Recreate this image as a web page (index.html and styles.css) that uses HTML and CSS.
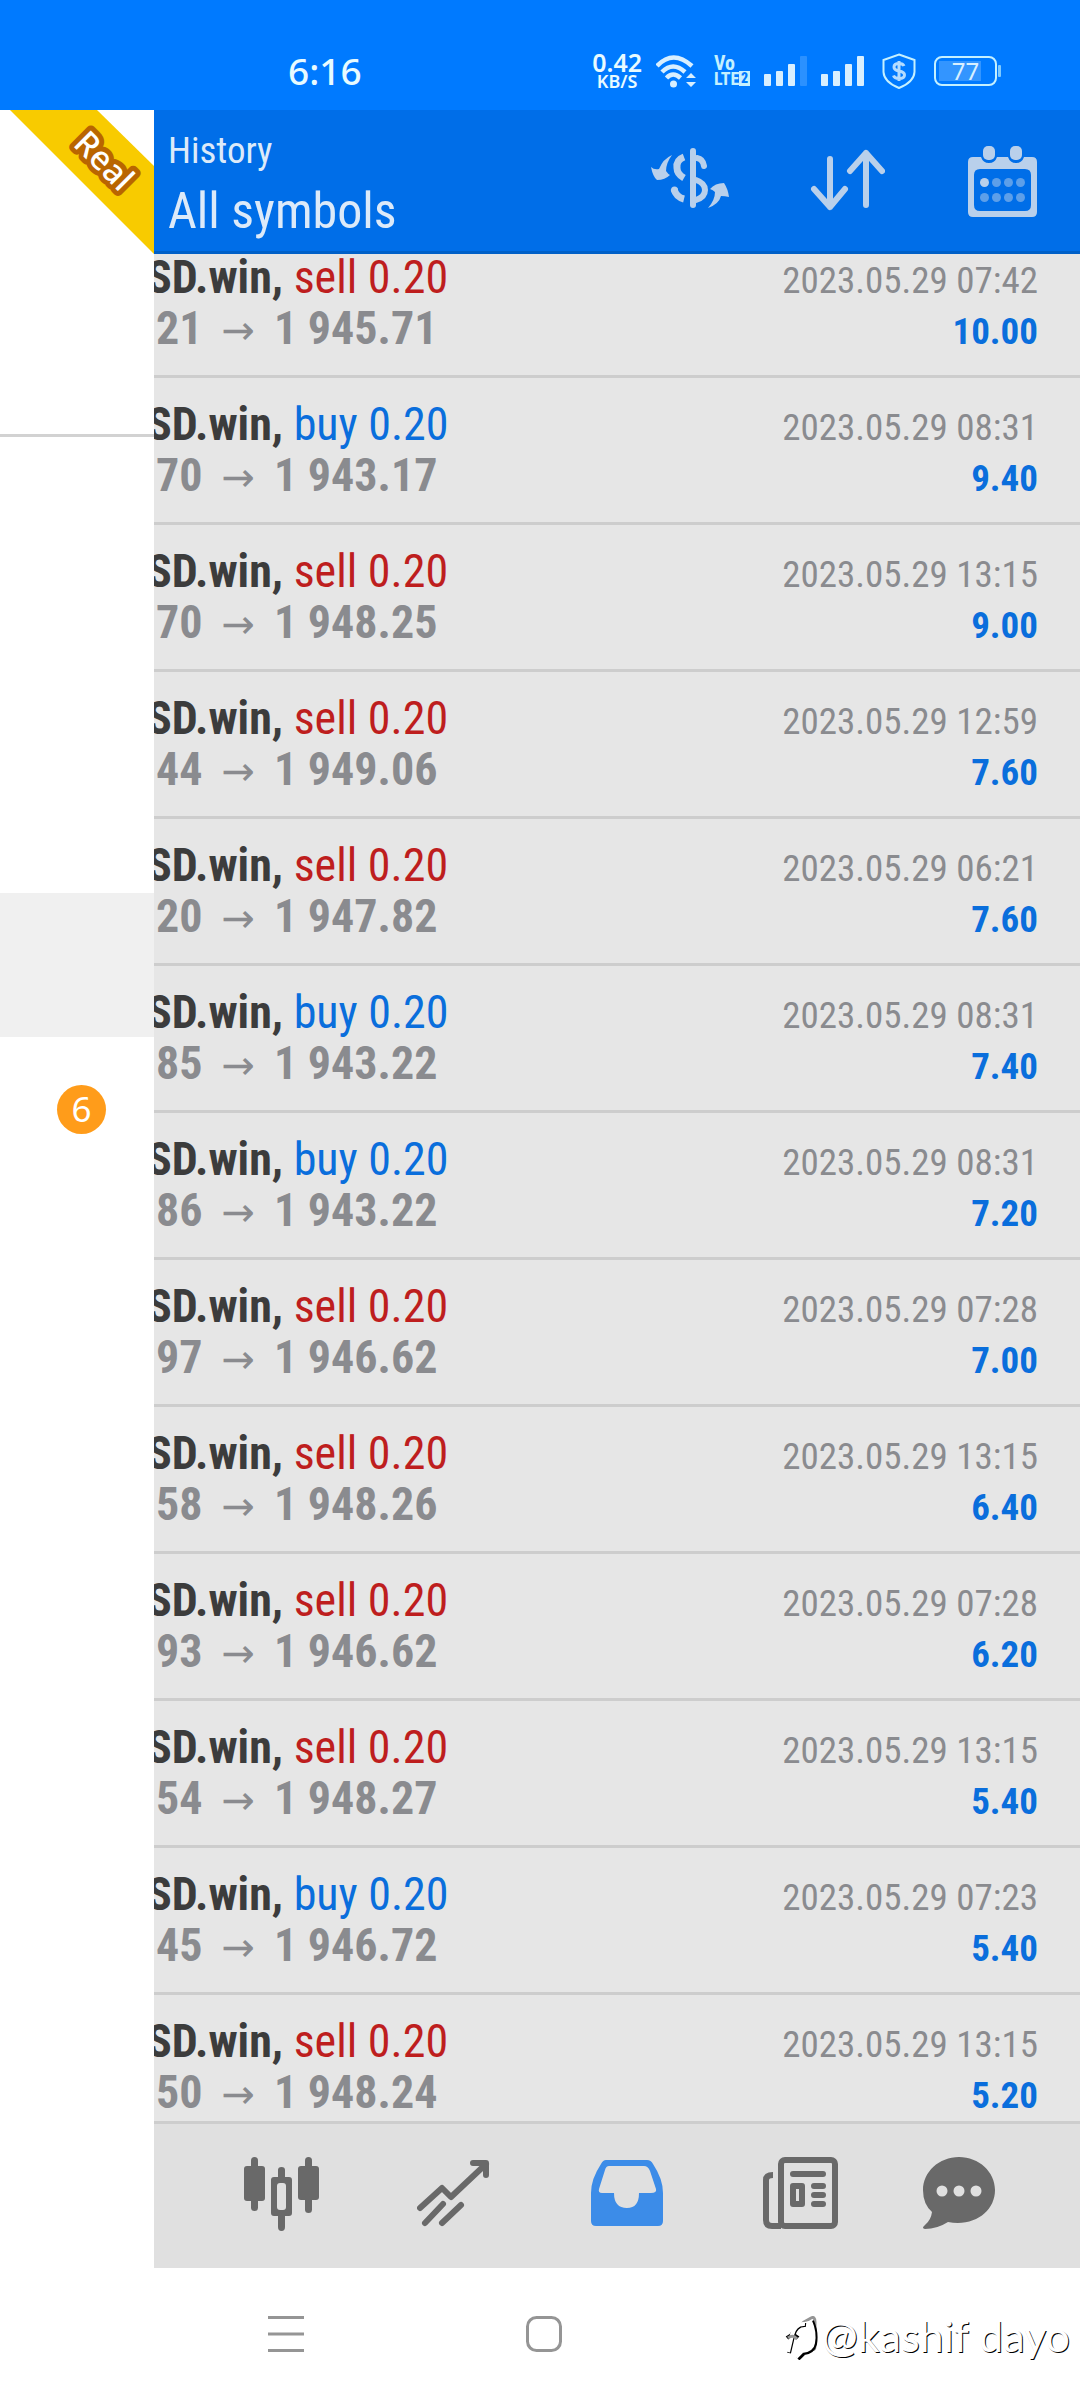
FILE: index.html
```html
<!DOCTYPE html>
<html lang="en">
<head>
<meta charset="utf-8">
<meta name="viewport" content="width=device-width">
<title>History</title>
<link rel="stylesheet" href="styles.css">
</head>
<body>
<div class="status">
  <time class="clock">6:16</time>
  <div class="indicators">
    <div class="speed"><span class="rate">0.42</span><span class="unit">KB/S</span></div>
    <svg width="44" height="36" viewBox="0 0 44 36">
      <g fill="none" stroke="#d8efff" stroke-width="4.5"><path d="M1 13Q17 -4 36 13"/><path d="M6 19Q17 8 29 19"/><path d="M10.500 25Q17 18 24.500 25"/></g>
      <circle cx="17.500" cy="31" r="3.500" fill="#d8efff"/>
      <path d="M30 25l5-5 5 5zM30 29l5 5 5-5z" fill="#d8efff"/>
    </svg>
    <div class="volte"><span>Vo</span><span class="lte">LTE<b class="sim">2</b></span></div>
    <svg width="43" height="30" viewBox="0 0 43 30" fill="#d8efff"><rect y="18" width="7" height="12" rx="1"/><rect x="12" y="15" width="7" height="15" rx="1"/><rect x="24" y="8" width="7" height="22" rx="1"/><rect x="36" width="7" height="30" rx="1" opacity=".2"/></svg>
    <svg width="43" height="30" viewBox="0 0 43 30" fill="#d8efff"><rect y="18" width="7" height="12" rx="1"/><rect x="12" y="15" width="7" height="15" rx="1"/><rect x="24" y="8" width="7" height="22" rx="1"/><rect x="36" width="7" height="30" rx="1"/></svg>
    <svg width="42" height="36" viewBox="0 0 42 36"><path d="M21 1.500L36.500 7V19Q36 29 21 35Q6 29 5.500 19V7Z" fill="none" stroke="#c4f0ff" stroke-width="2"/><path d="M26 13Q25 10.500 21 10.500Q16 10.500 16 14Q16 17 21 18Q26.500 19 26.500 22Q26.500 25.500 21 25.500Q16.500 25.500 15.500 22.500M21 8V28" fill="none" stroke="#b4dcff" stroke-width="3"/></svg>
    <div class="battery"><span class="cell">77</span><i class="tip"></i></div>
  </div>
</div>

<div class="stage">
  <aside class="drawer">
    <svg class="ribbon" width="154" height="144" viewBox="0 0 154 144">
      <path d="M10 0H97L154 56V144Z" fill="#f8cb00"/>
      <text class="ribbon-text" transform="translate(72 35) rotate(45)">Real</text>
    </svg>
    <div class="account"></div>
    <ul class="menu">
      <li></li><li></li><li></li><li class="selected"></li>
      <li><span class="badge">6</span></li>
    </ul>
  </aside>

  <main class="app">
    <header class="bar">
      <div class="titles"><span class="title">History</span><h1 class="subtitle">All symbols</h1></div>
      <div class="actions">
        <button aria-label="Currency"><svg width="78" height="78" viewBox="0 0 78 78">
          <path d="M0 28Q3 31 8 30Q12 20 21 16Q15 24 15 32Q17 35 19 36Q14 41 6 41Q2 38 0 28Z"/>
          <path d="M78 58Q74 57 70 57Q68 65 57 69Q64 61 64 53Q62 51 59 50Q64 44 73 44Q77 50 78 58Z"/>
          <g class="line"><path d="M42 12V66" stroke-width="6"/><path d="M33 18Q25 21 26 29Q26 35 33 39M33 60Q25 58 23 50" stroke-width="7" stroke-linecap="butt"/><path d="M46 19Q52 20 53 27M45 41Q54 44 54 51Q54 58 45 61" stroke-width="6"/></g>
          <circle cx="23.500" cy="51" r="3.500"/>
        </svg></button>
        <button aria-label="Sort"><svg width="78" height="78" viewBox="0 0 78 78"><g class="line" stroke-width="6"><path d="M23 20V68M7 50L23 68L38 50M59 66V14M43 32L59 14L75 32"/></g></svg></button>
        <button aria-label="Period"><svg width="78" height="78" viewBox="0 0 78 78">
          <path fill-rule="evenodd" d="M10 18H18Q20 24 26 24Q32 24 34 18H45Q47 24 53 24Q59 24 61 18H69Q74 18 74 23V73Q74 78 69 78H10Q5 78 5 73V23Q5 18 10 18ZM17 30Q11 30 11 36V66Q11 72 17 72H62Q68 72 68 66V36Q68 30 62 30Z"/>
          <rect x="20" y="7" width="12" height="14" rx="5"/><rect x="47" y="7" width="12" height="14" rx="5"/>
          <circle cx="21.500" cy="43.500" r="4.500"/>
          <g opacity=".5"><circle cx="33.500" cy="43.500" r="4.500"/><circle cx="45.500" cy="43.500" r="4.500"/><circle cx="57.500" cy="43.500" r="4.500"/><circle cx="21.500" cy="58.500" r="4.500"/><circle cx="33.500" cy="58.500" r="4.500"/><circle cx="45.500" cy="58.500" r="4.500"/><circle cx="57.500" cy="58.500" r="4.500"/></g>
        </svg></button>
      </div>
    </header>

    <section class="viewport">
      <ul class="deals">
        <li><p class="deal"><b>SD.win,</b> <span class="sell">sell 0.20</span></p><time>2023.05.29 07:42</time><p class="price">21<span class="arrow">→</span>1 945.71</p><b class="profit">10.00</b></li>
        <li><p class="deal"><b>SD.win,</b> <span class="buy">buy 0.20</span></p><time>2023.05.29 08:31</time><p class="price">70<span class="arrow">→</span>1 943.17</p><b class="profit">9.40</b></li>
        <li><p class="deal"><b>SD.win,</b> <span class="sell">sell 0.20</span></p><time>2023.05.29 13:15</time><p class="price">70<span class="arrow">→</span>1 948.25</p><b class="profit">9.00</b></li>
        <li><p class="deal"><b>SD.win,</b> <span class="sell">sell 0.20</span></p><time>2023.05.29 12:59</time><p class="price">44<span class="arrow">→</span>1 949.06</p><b class="profit">7.60</b></li>
        <li><p class="deal"><b>SD.win,</b> <span class="sell">sell 0.20</span></p><time>2023.05.29 06:21</time><p class="price">20<span class="arrow">→</span>1 947.82</p><b class="profit">7.60</b></li>
        <li><p class="deal"><b>SD.win,</b> <span class="buy">buy 0.20</span></p><time>2023.05.29 08:31</time><p class="price">85<span class="arrow">→</span>1 943.22</p><b class="profit">7.40</b></li>
        <li><p class="deal"><b>SD.win,</b> <span class="buy">buy 0.20</span></p><time>2023.05.29 08:31</time><p class="price">86<span class="arrow">→</span>1 943.22</p><b class="profit">7.20</b></li>
        <li><p class="deal"><b>SD.win,</b> <span class="sell">sell 0.20</span></p><time>2023.05.29 07:28</time><p class="price">97<span class="arrow">→</span>1 946.62</p><b class="profit">7.00</b></li>
        <li><p class="deal"><b>SD.win,</b> <span class="sell">sell 0.20</span></p><time>2023.05.29 13:15</time><p class="price">58<span class="arrow">→</span>1 948.26</p><b class="profit">6.40</b></li>
        <li><p class="deal"><b>SD.win,</b> <span class="sell">sell 0.20</span></p><time>2023.05.29 07:28</time><p class="price">93<span class="arrow">→</span>1 946.62</p><b class="profit">6.20</b></li>
        <li><p class="deal"><b>SD.win,</b> <span class="sell">sell 0.20</span></p><time>2023.05.29 13:15</time><p class="price">54<span class="arrow">→</span>1 948.27</p><b class="profit">5.40</b></li>
        <li><p class="deal"><b>SD.win,</b> <span class="buy">buy 0.20</span></p><time>2023.05.29 07:23</time><p class="price">45<span class="arrow">→</span>1 946.72</p><b class="profit">5.40</b></li>
        <li><p class="deal"><b>SD.win,</b> <span class="sell">sell 0.20</span></p><time>2023.05.29 13:15</time><p class="price">50<span class="arrow">→</span>1 948.24</p><b class="profit">5.20</b></li>
      </ul>
    </section>

    <nav class="tabs">
      <button aria-label="Quotes"><svg width="75" height="76" viewBox="0 0 75 76">
        <rect y="10" width="21" height="35" rx="3"/><rect x="7" y="1" width="7" height="54" rx="3.500"/><rect x="54" y="10" width="21" height="34" rx="3"/><rect x="61" y="1" width="7" height="56" rx="3.500"/>
        <path d="M34 21V14Q34 11 37.500 11Q41 11 41 14V21H45Q48 21 48 24V57Q48 60 45 60H41V71Q41 75 37.500 75Q34 75 34 71V60H30Q27 60 27 57V24Q27 21 30 21Z"/><rect x="33" y="27" width="9" height="27" rx="3" fill="#e0e0e0"/>
      </svg></button>
      <button aria-label="Charts"><svg width="75" height="76" viewBox="0 0 75 76">
        <g class="line" stroke-width="6"><path d="M3 52L25 32L34 41L69 8M56 7H69V19"/><path d="M8 67L26 48M25 67L44 49"/></g>
      </svg></button>
      <button class="active" aria-label="Trade"><svg width="75" height="76" viewBox="0 0 75 76">
        <path fill-rule="evenodd" d="M16 4H57Q61 4 63 8Q73 23 73 37V65Q73 70 68 70H6Q1 70 1 65V37Q1 23 11 8Q13 4 16 4ZM19 10Q16 10 15 14L9 33Q8 37 12 37H24Q24 52 37 52Q49 52 49 37H61Q67 37 66 33L60 15Q58 10 54 10Z"/>
      </svg></button>
      <button aria-label="News"><svg width="75" height="76" viewBox="0 0 75 76">
        <g class="line" stroke-width="6"><rect x="18" y="4" width="54" height="66" rx="4"/><path d="M10 19Q3 19 3 24V64Q3 70 9 70H18" stroke-linecap="butt"/><path d="M30 18H60M51 30H60M51 39H60M51 48H60"/><rect x="30" y="30" width="9" height="18"/></g>
      </svg></button>
      <button aria-label="Chat"><svg width="75" height="76" viewBox="0 0 75 76">
        <path d="M38 1C58 1 74 16 74 34C74 55 54 71 27 66Q16 73 4 73Q0 72 4 69Q10 64 11 56Q2 48 2 34C2 16 18 1 38 1Z"/>
        <g fill="#e0e0e0"><circle cx="21" cy="35" r="5.500"/><circle cx="38" cy="35" r="5.500"/><circle cx="55" cy="35" r="5.500"/></g>
      </svg></button>
    </nav>
  </main>
</div>

<nav class="system">
  <button aria-label="Recent"><svg width="36" height="36" viewBox="0 0 36 36"><path d="M0 1.500H36M0 18H36M0 34.500H36"/></svg></button>
  <button aria-label="Home"><svg width="36" height="36" viewBox="0 0 36 36"><rect x="1.500" y="1.500" width="33" height="33" rx="9"/></svg></button>
  <button aria-label="Back"><svg width="36" height="36" viewBox="0 0 36 36"><path d="M20 6L27 2Q31 0 31 6V30Q31 35 27 33L9 22Q5 19 9 16Z"/></svg></button>
  <div class="watermark">
    <svg width="38" height="48" viewBox="0 0 38 48">
      <path d="M7 41L12 19Q16 8 28 9Q34 20 32 32Q30 41 20 41Z" fill="#fff"/>
      <g fill="none" stroke-linejoin="round">
        <path stroke="#000" stroke-width="4" d="M5 41L9 24Q12 12 22 13M28 9Q33 20 31 32Q29 40 20 41L14 47M3 26Q9 21 14 26"/>
        <path stroke="#fff" stroke-width="4" d="M4 40L8 23Q11 11 21 12M26 9Q31 20 29 31Q28 38 18 39L12 45"/>
        <path stroke="#959595" stroke-width="3" d="M4 26Q9 22 13 27"/>
      </g>
    </svg>
    <span>@kashif dayo</span>
  </div>
</nav>
</body>
</html>
```
FILE: styles.css
```css
* { box-sizing: border-box; margin: 0; padding: 0; }
body {
  display: flex;
  flex-direction: column;
  height: 100vh;
  overflow: hidden;
  background: #fff;
  font-family: "Roboto Condensed", "Liberation Sans Narrow", Roboto, sans-serif;
}
ul { list-style: none; }
svg { display: block; flex: none; }
button { display: flex; align-items: center; justify-content: center; border: 0; background: none; }
.line { fill: none; stroke: currentColor; stroke-linecap: round; stroke-linejoin: round; }

.status {
  display: flex;
  flex: none;
  align-items: center;
  justify-content: space-between;
  height: 110px;
  padding: 32px 79px 0 288px;
  background: #007aff;
  color: #e8fbff;
  font-family: "Noto Sans", sans-serif;
}
.clock { font-size: 37px; font-weight: 500; line-height: 44px; }
.indicators { display: flex; align-items: center; gap: 14px; }
.speed { display: flex; flex-direction: column; align-items: center; font-weight: 600; }
.rate { font-size: 25px; line-height: 20px; }
.unit { font-size: 18px; line-height: 18px; }
.volte { width: 36px; color: #c4f0ff; font: bold 20px/15px "Roboto Condensed", "Liberation Sans Narrow", sans-serif; }
.volte span { display: block; }
.volte .lte { display: flex; align-items: center; font-size: 18px; }
.sim { width: 11px; margin-left: auto; background: #c4f0ff; color: #007aff; font-size: 14px; line-height: 15px; text-align: center; }
.battery { display: flex; align-items: center; gap: 1px; color: #d8efff; }
.cell {
  width: 63px;
  height: 30px;
  border: 2px solid #c4f0ff;
  border-radius: 8px;
  background: linear-gradient(90deg, #3395ff 42px, transparent 42px) 3px 3px / 53px 20px no-repeat;
  font-size: 24px;
  line-height: 26px;
  text-align: center;
}
.tip { width: 3px; height: 12px; border-radius: 1px; background: #7fcaff; }

.stage { display: flex; flex: 1; min-height: 0; }
.drawer { flex: none; width: 154px; background: #fff; }
.ribbon-text {
  fill: #fff;
  stroke: #b96500;
  stroke-width: 10px;
  stroke-linejoin: round;
  paint-order: stroke;
  font: 500 33px "Noto Sans", sans-serif;
}
.account { height: 183px; border-bottom: 3px solid #d2d2d2; }
.menu { padding-top: 24px; }
.menu li { display: flex; align-items: center; height: 144px; padding-left: 57px; }
.menu .selected { background: #f0f0f0; }
.badge {
  width: 49px;
  height: 49px;
  border-radius: 50%;
  background: #ff9c1a;
  color: #fff;
  font: 35px/48px "Noto Sans", sans-serif;
  text-align: center;
}

.app { display: flex; flex: 1; flex-direction: column; min-width: 0; background: #e6e6e6; }
.bar {
  display: flex;
  flex: none;
  justify-content: space-between;
  align-items: center;
  height: 144px;
  padding: 0 39px 0 14px;
  border-bottom: 3px solid #0060c8;
  background: #006ee8;
}
.title, .subtitle { display: block; color: #dceaf9; font-weight: 400; }
.title { font-size: 37px; line-height: 60px; }
.subtitle { font-size: 50px; line-height: 60px; }
.actions { display: flex; gap: 78px; padding-bottom: 6px; }
.actions button { color: #b9d0eb; }
.actions svg { fill: currentColor; }

.viewport { flex: 1; min-height: 0; overflow: hidden; }
.deals { margin-top: -23px; }
.deals li {
  display: grid;
  grid-template-columns: 1fr auto;
  align-items: baseline;
  height: 147px;
  padding: 21px 42px 0 0;
  border-bottom: 3px solid #cdcdcd;
  grid-auto-rows: 51px;
}
.deal, .price { font-size: 46px; line-height: 51px; white-space: nowrap; }
.deal { margin-left: -7px; color: #3c3c3c; }
.sell { color: #be1e1e; }
.buy { color: #0a6edc; }
.price { padding-left: 2px; color: #8a8b8f; font-weight: 700; }
.arrow { margin: 0 19px; font: 40px/40px "DejaVu Sans", sans-serif; }
.deals time, .profit { font-size: 37px; line-height: 51px; text-align: right; }
.deals time { color: #8a8b8f; }
.profit { color: #0a6edc; }

.tabs {
  display: grid;
  flex: none;
  grid-template-columns: repeat(4, 173fr) 143fr;
  height: 147px;
  padding: 0 50px 5px 41px;
  border-top: 3px solid #cdcdcd;
  background: #e0e0e0;
}
.tabs button { color: #696969; }
.tabs svg { fill: currentColor; }
.tabs .active { color: #3c8ce8; }
.actions .line, .tabs .line { fill: none; }

.system {
  position: relative;
  display: grid;
  flex: none;
  grid-template-columns: repeat(3, 1fr);
  height: 132px;
  padding: 0 149px 0 157px;
}
.system button svg { fill: none; stroke: #959595; stroke-width: 3px; }
.watermark {
  position: absolute;
  right: 10px;
  bottom: 34px;
  display: flex;
  align-items: center;
  color: #fff;
  font: 43px/60px Lato, sans-serif;
  text-shadow: 1px 1px 0 #000;
}
```
